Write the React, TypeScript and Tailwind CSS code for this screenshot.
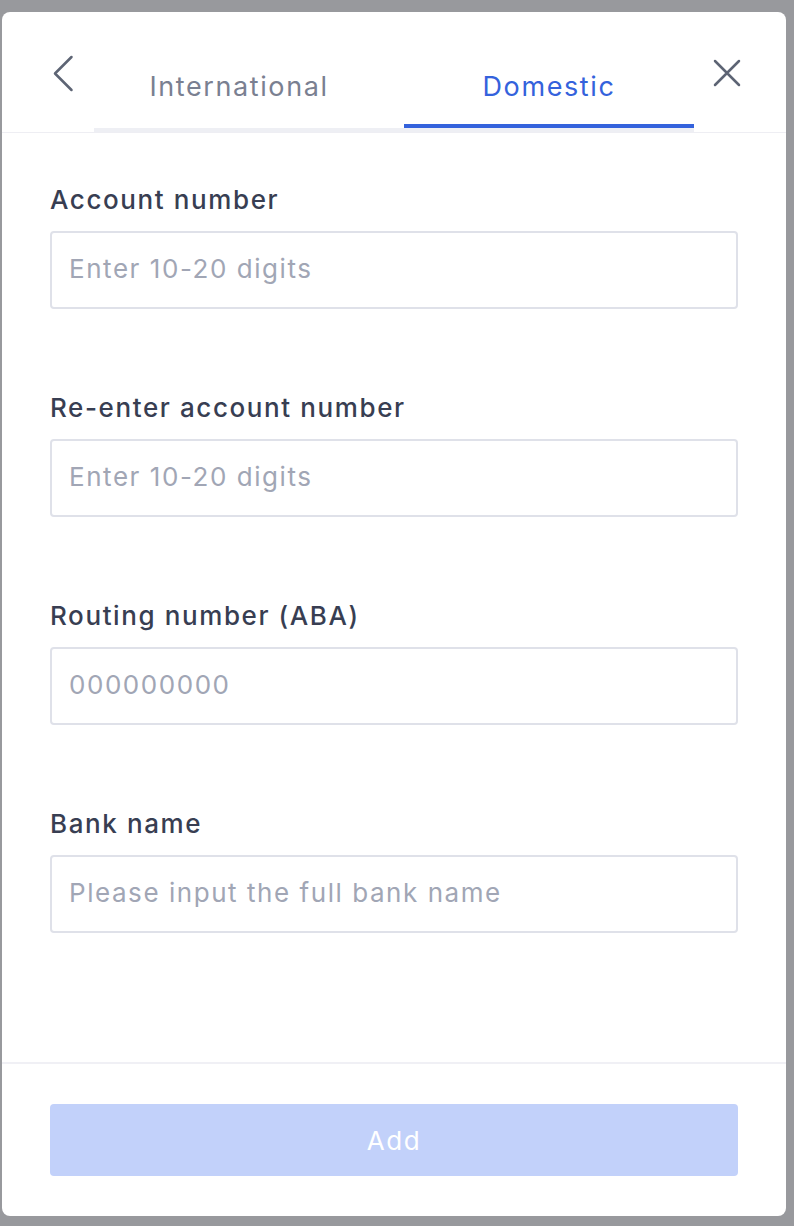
import { useState } from "react";

const fields = [
  { label: "Account number", placeholder: "Enter 10-20 digits" },
  { label: "Re-enter account number", placeholder: "Enter 10-20 digits" },
  { label: "Routing number (ABA)", placeholder: "000000000" },
  { label: "Bank name", placeholder: "Please input the full bank name" },
];

export default function App() {
  const [tab, setTab] = useState<"international" | "domestic">("domestic");

  return (
    <div className="min-h-[1226px] bg-[#98999d] pb-[10px] pl-[2px] pr-[8px] pt-[12px] font-['Inter',sans-serif]">
      <div className="flex h-[1204px] w-[784px] flex-col rounded-lg bg-white">
        {/* header */}
        <div className="flex h-[121px] border-b border-[#eeeef3]">
          <button className="flex h-[120px] w-[92px] items-start pl-[50px] pt-[43px] text-[#5d6474]">
            <svg width="22" height="38" viewBox="0 0 22 38" fill="none">
              <path d="M19.5 2L3 18.5L19.5 35" stroke="currentColor" strokeWidth="2.5" strokeLinecap="round" strokeLinejoin="round" />
            </svg>
          </button>
          <div className="flex h-[120px] w-[600px] flex-col justify-end">
            <div className="flex gap-[20px]">
              <button
                onClick={() => setTab("international")}
                className={`h-[112px] w-[290px] border-b-4 pb-[21px] pt-[55px] text-[27px] leading-8 tracking-[1.6px] ${
                  tab === "international" ? "border-[#3462dc] text-[#3462dc]" : "border-transparent text-[#7a8091]"
                }`}
              >
                International
              </button>
              <button
                onClick={() => setTab("domestic")}
                className={`h-[112px] w-[290px] border-b-4 pb-[21px] pt-[55px] text-[27px] leading-8 tracking-[1.6px] ${
                  tab === "domestic" ? "border-[#3462dc] text-[#3462dc]" : "border-transparent text-[#7a8091]"
                }`}
              >
                Domestic
              </button>
            </div>
            <div className="h-[4px] bg-[#eeeff4]" />
          </div>
          <button className="flex h-[120px] items-start pl-[19px] pt-[47px] text-[#5d6474]">
            <svg width="28" height="28" viewBox="0 0 28 28" fill="none">
              <path d="M2 2L26 26M26 2L2 26" stroke="currentColor" strokeWidth="2.5" strokeLinecap="round" />
            </svg>
          </button>
        </div>

        {/* form */}
        <div className="flex flex-1 flex-col gap-[83px] px-[48px] pt-[51px]">
          {fields.map((f) => (
            <div key={f.label} className="flex flex-col gap-[15px]">
              <label className="text-[26px] font-medium leading-8 tracking-[1.6px] text-[#383e52]">{f.label}</label>
              <input
                placeholder={f.placeholder}
                className="h-[78px] w-[688px] rounded-[4px] border-2 border-[#dfe1e9] px-[17px] pb-[3px] text-[26px] tracking-[1.55px] text-[#3b4155] outline-none placeholder:text-[#a1a6b5]"
              />
            </div>
          ))}
        </div>

        {/* footer */}
        <div className="border-t-2 border-[#f0f0f5] px-[48px] py-[40px]">
          <button className="flex h-[72px] w-[688px] items-center justify-center rounded-[4px] bg-[#c2d1fa] text-[26px] tracking-[1.6px] text-white">
            Add
          </button>
        </div>
      </div>
    </div>
  );
}
